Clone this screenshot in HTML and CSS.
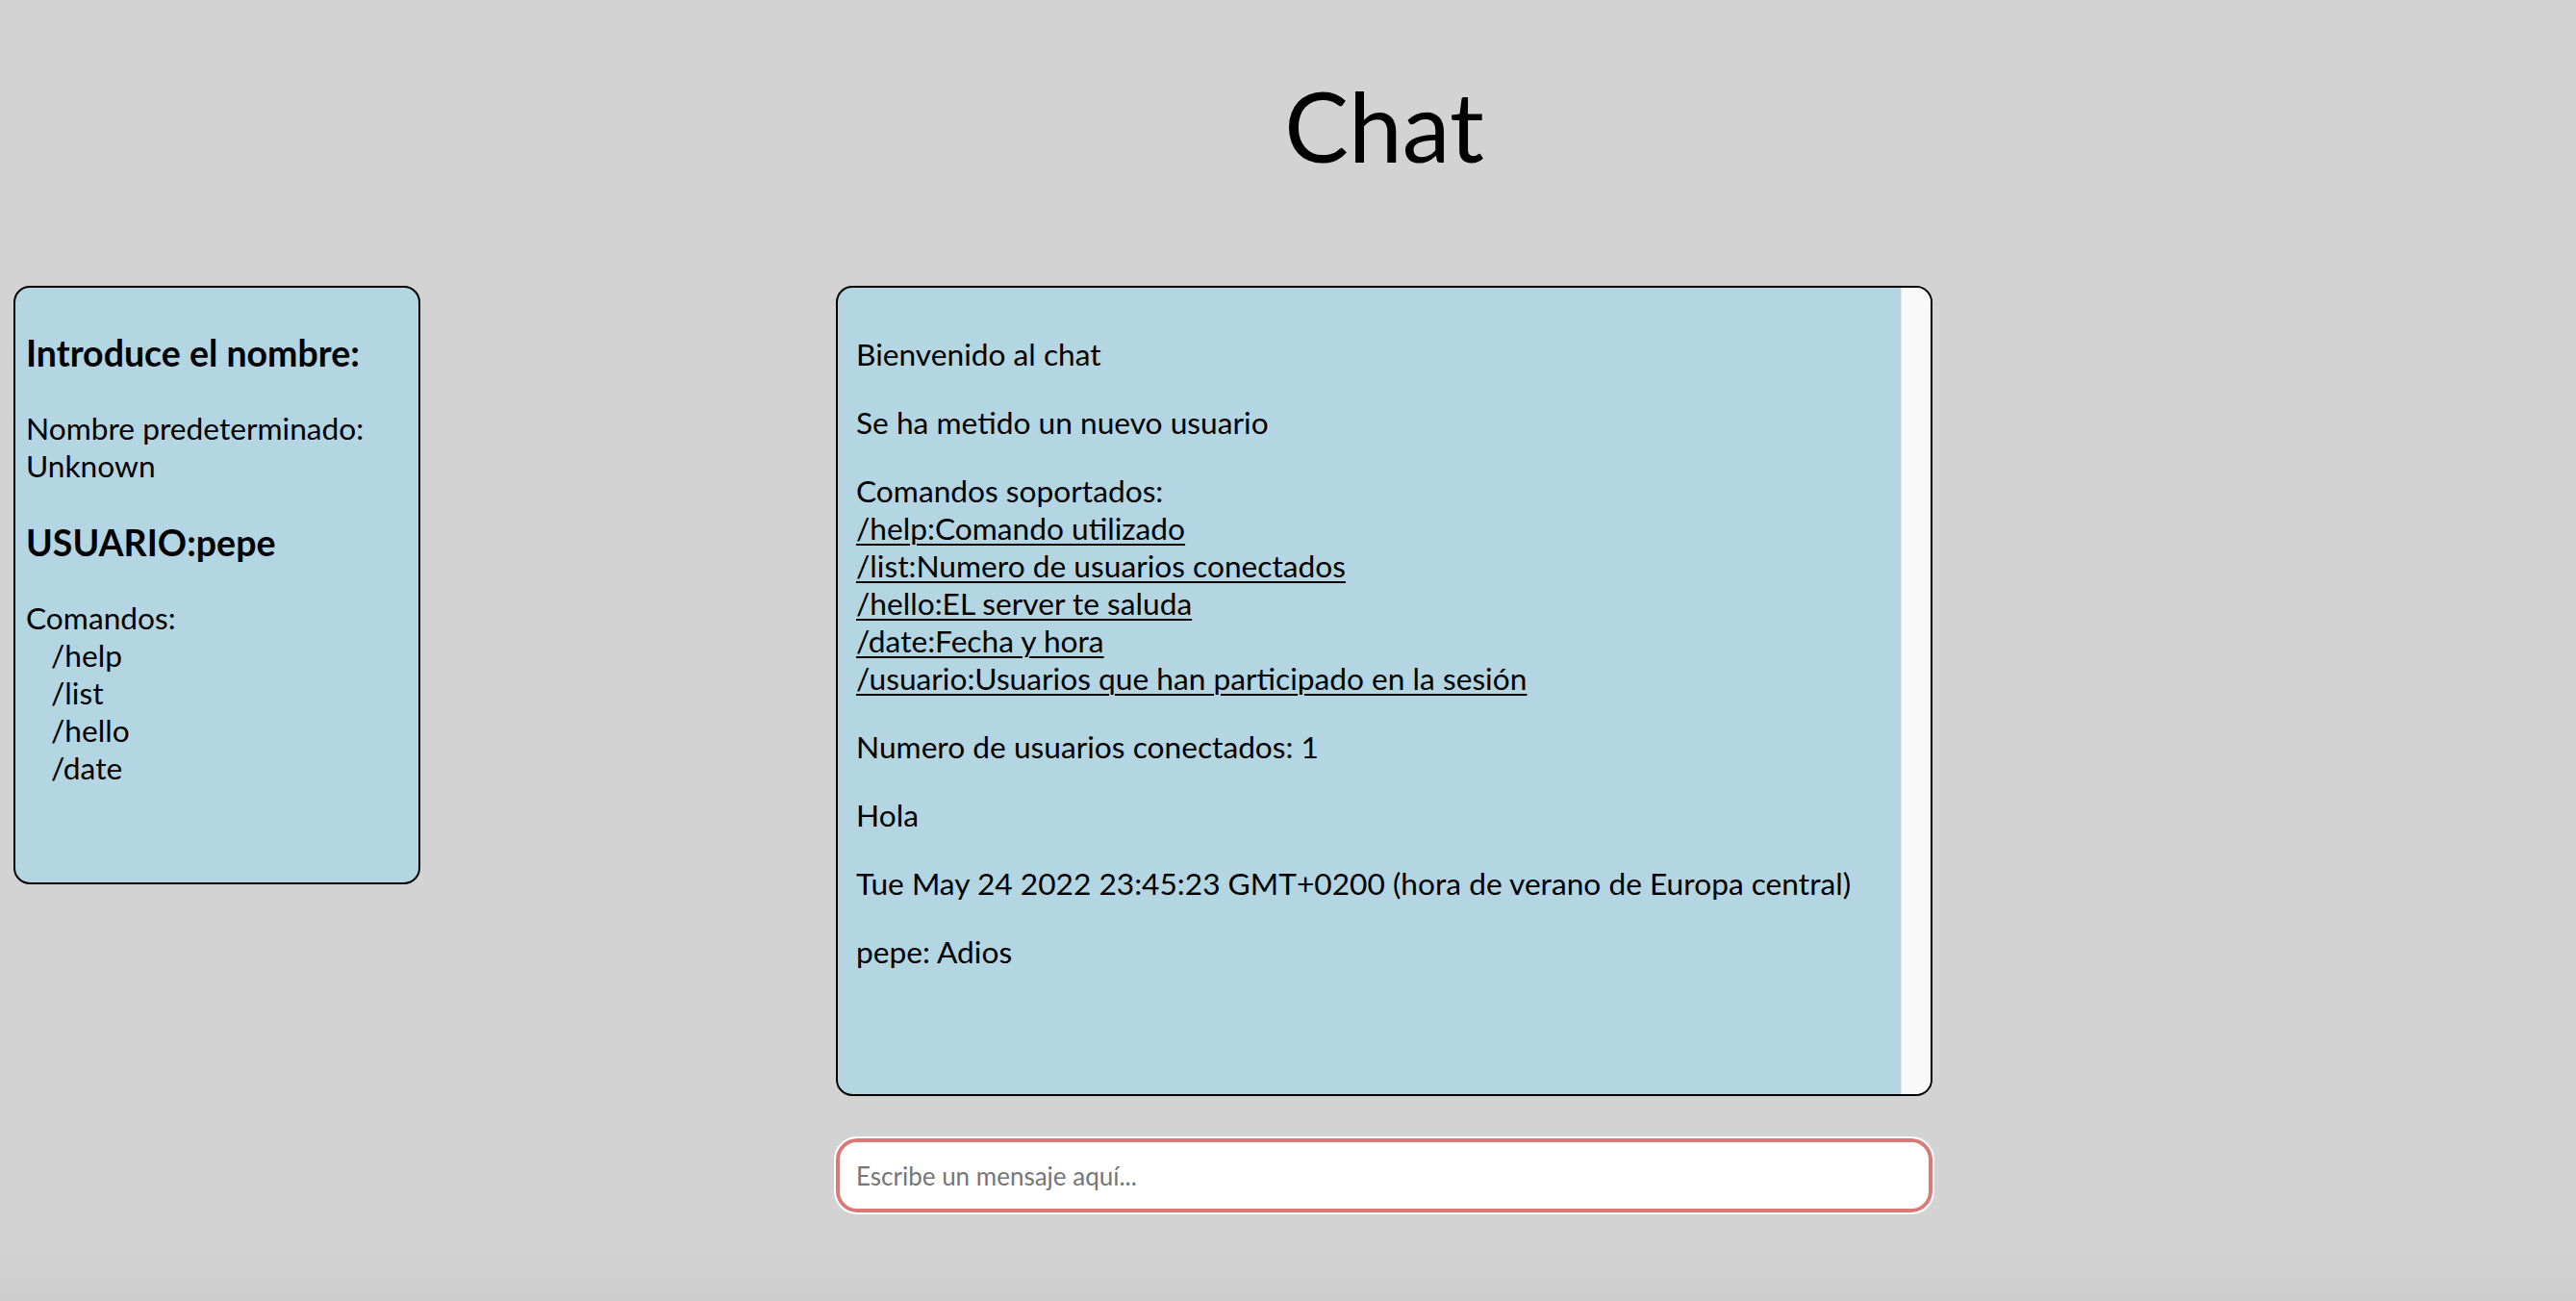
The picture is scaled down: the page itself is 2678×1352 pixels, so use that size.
FILE: index.html
```html
<!DOCTYPE html>
<html lang="es">
<head>
<meta charset="utf-8">
<title>Chat</title>
<link rel="stylesheet" href="styles.css">
</head>
<body>
<div class="page">
  <h1 class="title">Chat</h1>
  <aside class="side">
    <h3 class="side-heading">Introduce el nombre:</h3>
    <p class="side-text">Nombre predeterminado:<br>Unknown</p>
    <h3 class="side-heading">USUARIO:pepe</h3>
    <div class="side-text commands">
      <div>Comandos:</div>
      <div class="cmd">/help</div>
      <div class="cmd">/list</div>
      <div class="cmd">/hello</div>
      <div class="cmd">/date</div>
    </div>
  </aside>
  <main class="chat-col">
    <div class="chat-box">
      <div class="messages">
        <p class="msg">Bienvenido al chat</p>
        <p class="msg">Se ha metido un nuevo usuario</p>
        <p class="msg">Comandos soportados:<br>
          <u>/help:Comando utilizado</u><br>
          <u>/list:Numero de usuarios conectados</u><br>
          <u>/hello:EL server te saluda</u><br>
          <u>/date:Fecha y hora</u><br>
          <u>/usuario:Usuarios que han participado en la sesión</u></p>
        <p class="msg">Numero de usuarios conectados: 1</p>
        <p class="msg">Hola</p>
        <p class="msg">Tue May 24 2022 23:45:23 GMT+0200 (hora de verano de Europa central)</p>
        <p class="msg">pepe: Adios</p>
      </div>
      <div class="scrollbar"></div>
    </div>
    <input class="msg-input" type="text" placeholder="Escribe un mensaje aquí...">
  </main>
</div>
</body>
</html>
```
FILE: styles.css
```css
html {
  height: 100%;
}
body {
  margin: 0;
  min-height: 100%;
  background: linear-gradient(to bottom, #d3d3d3 calc(100% - 70px), #cdcdcd 100%);
  font-family: Lato, "Open Sans", sans-serif;
  font-size: 31.7px;
  line-height: 39px;
  color: #000;
}
.page {
  display: grid;
  grid-template-columns: 423px 1140px;
  grid-template-rows: auto auto;
  column-gap: 432px;
  padding: 0 14px;
  align-items: start;
}
.title {
  grid-column: 2;
  grid-row: 1;
  margin: 0;
  padding-top: 70px;
  height: 297px;
  box-sizing: border-box;
  text-align: center;
  font-size: 100px;
  line-height: 120px;
  font-weight: 400;
}
.side {
  grid-column: 1;
  grid-row: 2;
  box-sizing: border-box;
  height: 622px;
  background: #b4d6e2;
  border: 2px solid #000;
  border-radius: 17px;
  padding: 8px 11px 5px;
}
.side-heading {
  font-size: 37.5px;
  line-height: 45px;
  font-weight: 700;
  margin: 37px 0;
}
.side-text {
  margin: 32px 0;
}
.cmd {
  padding-left: 26px;
}
.chat-col {
  grid-column: 2;
  grid-row: 2;
  display: flex;
  flex-direction: column;
  gap: 44px;
}
.chat-box {
  display: flex;
  box-sizing: border-box;
  height: 842px;
  background: #b4d6e2;
  border: 2px solid #000;
  border-radius: 17px;
  overflow: hidden;
}
.messages {
  flex: 1;
  padding: 18px 19px;
}
.msg {
  margin: 32px 0;
}
.msg u {
  text-decoration-thickness: 2px;
  text-underline-offset: 4px;
}
.scrollbar {
  width: 30px;
  background: #f9f9f9;
  border-left: 1px solid #e6e6e6;
}
.msg-input {
  box-sizing: border-box;
  height: 77px;
  width: 100%;
  border: 4px solid #d97a78;
  border-radius: 22px;
  outline: 2px solid #fff;
  background: #fff;
  padding: 0 17px;
  font-family: Lato, "Open Sans", sans-serif;
  font-size: 26px;
  color: #000;
}
.msg-input::placeholder {
  color: #767676;
}
```
